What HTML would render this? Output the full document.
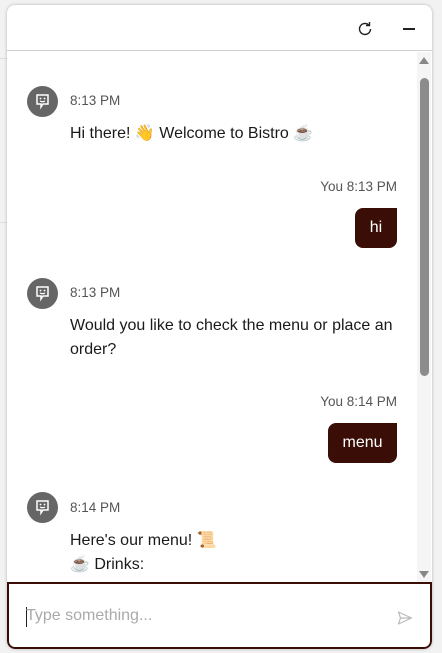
<!DOCTYPE html>
<html><head><meta charset="utf-8">
<style>
*{box-sizing:border-box;margin:0;padding:0}
body{width:442px;height:653px;background:#f2f2f2;font-family:"Liberation Sans","Noto Sans CJK SC",sans-serif;position:relative;overflow:hidden}
.bgline{position:absolute;left:0;top:58px;width:8px;height:1px;background:#ddd}
.bgline2{position:absolute;left:0;top:222px;width:8px;height:1px;background:#ddd}
.panel{position:absolute;left:7px;top:5px;width:425px;height:644px;background:#fff;border-radius:8px;box-shadow:0 0 3px rgba(0,0,0,.25);overflow:hidden}
.header{height:46px;border-bottom:1px solid #cfcfcf;position:relative}
.chat{position:absolute;top:47px;left:0;width:425px;height:530px;overflow:hidden}
.sb{position:absolute;right:1px;top:47px;width:14px;height:530px;background:#f5f5f5}
.thumb{position:absolute;left:3px;top:26px;width:9px;height:298px;background:#8c8c8c;border-radius:5px}
.av{position:absolute;left:20px;width:31px;height:31px;border-radius:50%;background:#666}
.time{position:absolute;font-size:13.5px;color:#555}
.msg{position:absolute;left:63px;font-size:16px;color:#1a1a1a;line-height:24px}
.you{position:absolute;right:35px;font-size:13.5px;color:#555}
.bub{position:absolute;background:#3a0e06;color:#fff;font-size:16px;border-radius:8px 0 8px 8px;text-align:center;line-height:40px;height:40px}
.input{position:absolute;left:0;top:577px;width:425px;height:67px;border:2px solid #3a0e06;border-radius:0 0 8px 8px}
.ph{position:absolute;left:17px;top:23px;font-size:16px;color:#aaa}
.caret{position:absolute;left:17px;top:23px;width:1px;height:20px;background:#222}
</style></head><body>
<div class="bgline"></div><div class="bgline2"></div>
<div class="panel">
 <div class="header">
  <svg style="position:absolute;left:350px;top:16px" width="16" height="16" viewBox="0 0 16 16"><path d="M13.5 8a5.5 5.5 0 1 1-1.8-4.1" fill="none" stroke="#222" stroke-width="1.4"/><path d="M12.5 1v3.5H9" fill="none" stroke="#222" stroke-width="1.4"/></svg>
  <div style="position:absolute;left:396px;top:23px;width:12px;height:1.5px;background:#222"></div>
 </div>
 <div class="chat">
  <div class="av" style="top:34px"><svg width="31" height="31" viewBox="0 0 31 31"><path d="M10 9h11v9h-5l-2 3v-3h-4z" fill="none" stroke="#fff" stroke-width="1.5"/><circle cx="13.5" cy="12.5" r=".9" fill="#fff"/><circle cx="17.5" cy="12.5" r=".9" fill="#fff"/><path d="M13 15q2.5 1.5 5 0" stroke="#fff" stroke-width="1.2" fill="none"/></svg></div>
  <div class="time" style="left:63px;top:41px">8:13 PM</div>
  <div class="msg" style="top:70px">Hi there! 👋 Welcome to Bistro ☕</div>
  <div class="you" style="top:127px">You 8:13 PM</div>
  <div class="bub" style="left:348px;top:156px;width:42px">hi</div>
  <div class="av" style="top:226px"><svg width="31" height="31" viewBox="0 0 31 31"><path d="M10 9h11v9h-5l-2 3v-3h-4z" fill="none" stroke="#fff" stroke-width="1.5"/><circle cx="13.5" cy="12.5" r=".9" fill="#fff"/><circle cx="17.5" cy="12.5" r=".9" fill="#fff"/><path d="M13 15q2.5 1.5 5 0" stroke="#fff" stroke-width="1.2" fill="none"/></svg></div>
  <div class="time" style="left:63px;top:233px">8:13 PM</div>
  <div class="msg" style="top:262px;width:345px">Would you like to check the menu or place an order?</div>
  <div class="you" style="top:342px">You 8:14 PM</div>
  <div class="bub" style="left:321px;top:371px;width:69px">menu</div>
  <div class="av" style="top:440px"><svg width="31" height="31" viewBox="0 0 31 31"><path d="M10 9h11v9h-5l-2 3v-3h-4z" fill="none" stroke="#fff" stroke-width="1.5"/><circle cx="13.5" cy="12.5" r=".9" fill="#fff"/><circle cx="17.5" cy="12.5" r=".9" fill="#fff"/><path d="M13 15q2.5 1.5 5 0" stroke="#fff" stroke-width="1.2" fill="none"/></svg></div>
  <div class="time" style="left:63px;top:448px">8:14 PM</div>
  <div class="msg" style="top:477px">Here's our menu! 📜<br>☕ Drinks:</div>
 </div>
 <div class="sb"><div class="thumb"></div>
  <div style="position:absolute;left:2px;top:5px;width:0;height:0;border-left:5px solid transparent;border-right:5px solid transparent;border-bottom:7px solid #888"></div>
  <div style="position:absolute;left:2px;top:519px;width:0;height:0;border-left:5px solid transparent;border-right:5px solid transparent;border-top:7px solid #888"></div>
 </div>
 <div class="input"><div class="caret"></div><div class="ph">Type something...</div>
  <svg style="position:absolute;left:388px;top:26px" width="16" height="16" viewBox="0 0 16 16"><path d="M1.5 2l13 6-13 6 2-6z M3.5 8h11" fill="none" stroke="#bbb" stroke-width="1.2" stroke-linejoin="round"/></svg>
 </div>
</div>
</body></html>
